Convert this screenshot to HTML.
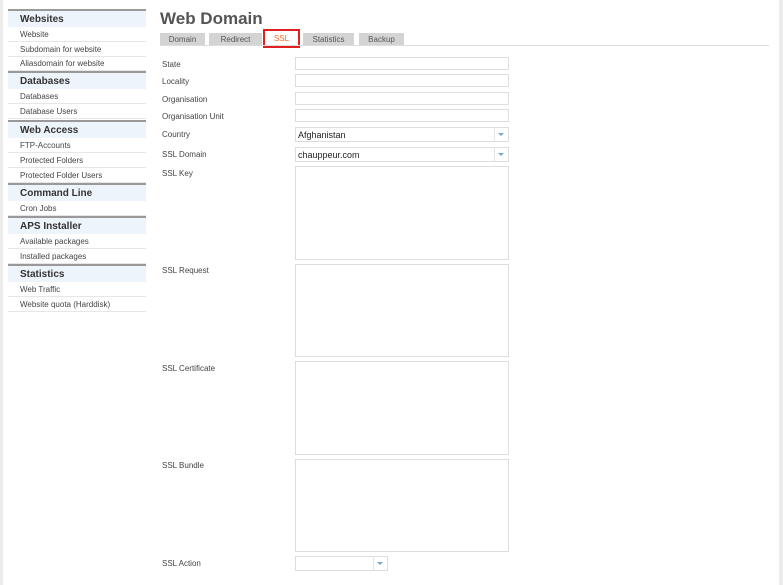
<!DOCTYPE html>
<html><head><meta charset="utf-8"><style>
*{margin:0;padding:0;box-sizing:border-box}
body{width:783px;height:585px;background:#fff;position:relative;overflow:hidden;font-family:"Liberation Sans",sans-serif;color:#333}
.lb{position:absolute;left:0;top:0;width:3px;height:585px;background:#ececec}
.rb{position:absolute;right:0;top:0;width:4px;height:585px;background:#ececec}
.h{position:absolute;left:8px;width:138px;height:18px;border-top:2px solid #999;background:#eef4fb;font-size:10px;font-weight:bold;color:#333;padding-left:12px;line-height:18px}
.i{position:absolute;left:8px;width:138px;height:15px;border-bottom:1px solid #e6e6e6;font-size:8px;color:#444;padding-left:12px;line-height:16px}
.t{position:absolute;left:160px;top:9px;font-size:17px;font-weight:bold;color:#555}
.tab{position:absolute;top:33px;height:12px;background:#d4d4d4;font-size:8px;color:#555;text-align:center;line-height:13px}
.line{position:absolute;left:160px;top:45px;width:609px;height:1px;background:#ddd}
.l{position:absolute;left:162px;font-size:8px;color:#444}
.f{position:absolute;left:295px;width:214px;border:1px solid #ddd;background:#fff;font-size:9px;color:#222;padding-left:2px}
.sel:after{content:"";position:absolute;right:4px;top:5px;border-left:3px solid transparent;border-right:3px solid transparent;border-top:3px solid #7aa7cf}
.sel:before{content:"";position:absolute;right:13px;top:0;bottom:0;border-left:1px solid #e4e4e4}
</style></head><body>
<div class="lb"></div><div class="rb"></div>
<div class="h" style="top:9px">Websites</div>
<div class="i" style="top:27px">Website</div>
<div class="i" style="top:42px">Subdomain for website</div>
<div class="i" style="top:56px">Aliasdomain for website</div>
<div class="h" style="top:71px">Databases</div>
<div class="i" style="top:89px">Databases</div>
<div class="i" style="top:104px">Database Users</div>
<div class="h" style="top:120px">Web Access</div>
<div class="i" style="top:138px">FTP-Accounts</div>
<div class="i" style="top:153px">Protected Folders</div>
<div class="i" style="top:168px">Protected Folder Users</div>
<div class="h" style="top:183px">Command Line</div>
<div class="i" style="top:201px">Cron Jobs</div>
<div class="h" style="top:216px">APS Installer</div>
<div class="i" style="top:234px">Available packages</div>
<div class="i" style="top:249px">Installed packages</div>
<div class="h" style="top:264px">Statistics</div>
<div class="i" style="top:282px">Web Traffic</div>
<div class="i" style="top:297px">Website quota (Harddisk)</div>

<div class="t">Web Domain</div>
<div class="tab" style="left:160px;width:45px">Domain</div>
<div class="tab" style="left:209px;width:53px">Redirect</div>
<div class="tab" style="left:263px;top:29px;width:37px;height:19px;background:#fff;border:2px solid #e02020;color:#f26a1b;line-height:16px">SSL</div>
<div class="tab" style="left:303px;width:51px">Statistics</div>
<div class="tab" style="left:359px;width:45px">Backup</div>
<div class="line"></div>

<div class="l" style="top:60px">State</div><div class="f" style="top:57px;height:13px"></div>
<div class="l" style="top:77px">Locality</div><div class="f" style="top:74px;height:13px"></div>
<div class="l" style="top:95px">Organisation</div><div class="f" style="top:92px;height:13px"></div>
<div class="l" style="top:112px">Organisation Unit</div><div class="f" style="top:109px;height:13px"></div>
<div class="l" style="top:130px">Country</div><div class="f sel" style="top:127px;height:15px;line-height:15px">Afghanistan</div>
<div class="l" style="top:150px">SSL Domain</div><div class="f sel" style="top:147px;height:15px;line-height:15px">chauppeur.com</div>
<div class="l" style="top:169px">SSL Key</div><div class="f" style="top:166px;height:94px"></div>
<div class="l" style="top:266px">SSL Request</div><div class="f" style="top:264px;height:93px"></div>
<div class="l" style="top:364px">SSL Certificate</div><div class="f" style="top:361px;height:94px"></div>
<div class="l" style="top:461px">SSL Bundle</div><div class="f" style="top:459px;height:93px"></div>
<div class="l" style="top:559px">SSL Action</div><div class="f sel" style="top:556px;height:15px;width:93px"></div>
</body></html>
